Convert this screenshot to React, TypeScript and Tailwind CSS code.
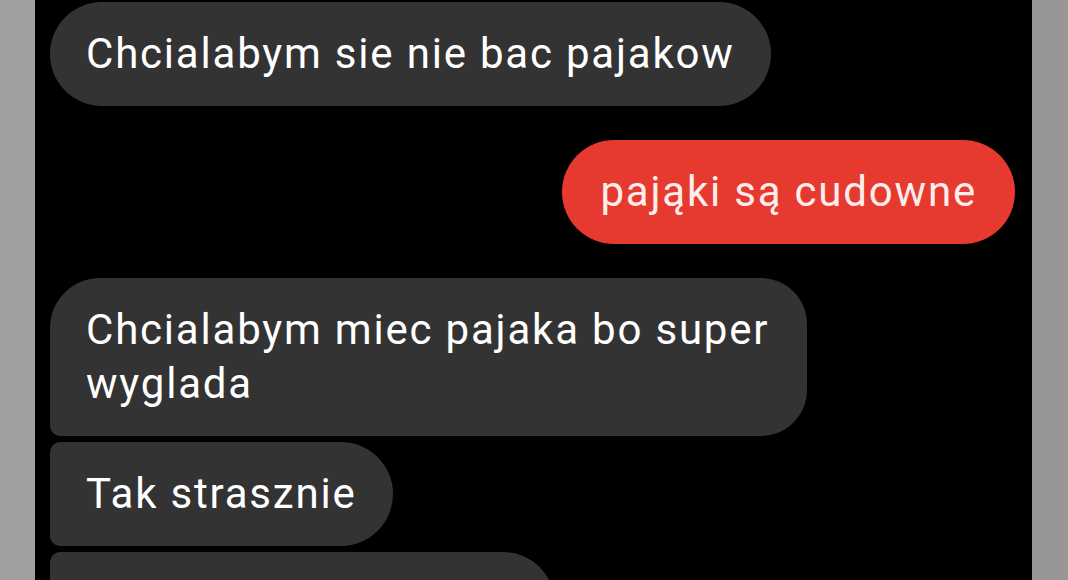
const font = { fontFamily: 'Roboto, "Noto Sans", Arial, sans-serif' };

type Msg = {
  text: string;
  mine?: boolean;
  shape: string;
  gap: string;
};

const messages: Msg[] = [
  { text: 'Chcialabym sie nie bac pajakow', shape: 'rounded-[52px]', gap: 'mt-[2px]' },
  { text: 'pająki są cudowne', mine: true, shape: 'rounded-[52px]', gap: 'mt-[34px]' },
  {
    text: 'Chcialabym miec pajaka bo super wyglada',
    shape: 'rounded-tl-[50px] rounded-r-[46px] rounded-bl-[10px]',
    gap: 'mt-[34px]',
  },
  { text: 'Tak strasznie', shape: 'rounded-l-[10px] rounded-r-[52px]', gap: 'mt-[6px]' },
];

function Bubble({ m }: { m: Msg }) {
  return (
    <div
      className={`${m.gap} ${m.shape} ${
        m.mine ? 'self-end bg-[#e63a30] text-[#fdeeec] px-[38px]' : 'self-start bg-[#333333] text-white px-[36px]'
      } w-fit max-w-[757px] py-[25px] text-[42px] leading-[54px] tracking-[1.8px]`}
    >
      {m.text}
    </div>
  );
}

export default function App() {
  return (
    <div className="flex h-[580px] w-[1068px] overflow-hidden bg-black" style={font}>
      <div className="w-[35px] shrink-0 bg-[#a0a0a0]" />
      <div className="flex flex-1 flex-col pl-[15px] pr-[17px]">
        {messages.map((m, i) => (
          <Bubble key={i} m={m} />
        ))}
        {/* next bubble, cut off by the screenshot */}
        <div className="mt-[6px] h-[104px] w-[505px] shrink-0 rounded-l-[10px] rounded-r-[52px] bg-[#333333]" />
      </div>
      <div className="w-[36px] shrink-0 bg-[#969696]" />
    </div>
  );
}
